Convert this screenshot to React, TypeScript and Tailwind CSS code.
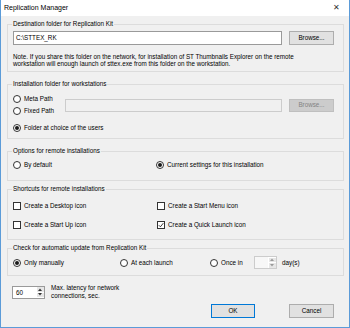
import React from "react";

function Radio({ checked, label }: { checked?: boolean; label: string }) {
  return (
    <div className="flex items-center gap-[3px]">
      <span className="flex h-[8px] w-[8px] items-center justify-center rounded-full border border-[#333] bg-white">
        {checked && <span className="h-[4px] w-[4px] rounded-full bg-[#1a1a1a]" />}
      </span>
      <span>{label}</span>
    </div>
  );
}

function Check({ checked, label }: { checked?: boolean; label: string }) {
  return (
    <div className="flex items-center gap-[3px]">
      <span className="flex h-[8px] w-[8px] items-center justify-center border border-[#333] bg-white">
        {checked && (
          <svg width="6" height="6" viewBox="0 0 6 6">
            <path d="M0.8 3.2 L2.4 4.8 L5.3 1.2" fill="none" stroke="#222" strokeWidth="0.9" />
          </svg>
        )}
      </span>
      <span>{label}</span>
    </div>
  );
}

function Group({ title, className, children }: { title: string; className: string; children: React.ReactNode }) {
  return (
    <div className={`relative border border-[#dcdcdc] ${className}`}>
      <span className="absolute left-[4px] top-[-5px] bg-[#f0f0f0] px-[1px] leading-[8px]">{title}</span>
      {children}
    </div>
  );
}

function Spin({ value, disabled, className }: { value?: string; disabled?: boolean; className: string }) {
  return (
    <div
      className={`flex items-stretch border ${
        disabled ? "border-[#cccccc] bg-[#f7f7f7]" : "border-[#9a9a9a] bg-white"
      } ${className}`}
    >
      <span className="flex-1 pl-[3px] leading-[11px]">{value}</span>
      <span className="flex w-[8px] flex-col gap-[1px] bg-white p-[0.5px]">
        <span className="flex flex-1 items-center justify-center bg-[#e6e6e6]">
          <svg width="4" height="3" viewBox="0 0 4 3">
            <path d="M0 3 L2 0.5 L4 3 Z" fill={disabled ? "#9a9a9a" : "#333"} />
          </svg>
        </span>
        <span className="flex flex-1 items-center justify-center bg-[#e6e6e6]">
          <svg width="4" height="3" viewBox="0 0 4 3">
            <path d="M0 0 L2 2.5 L4 0 Z" fill={disabled ? "#9a9a9a" : "#333"} />
          </svg>
        </span>
      </span>
    </div>
  );
}

export default function App() {
  return (
    <div className="flex h-[328px] w-[350px] flex-col border-x border-b border-[#5b9bd8] bg-[#f0f0f0] font-['Liberation_Sans',Arial,sans-serif] text-[6.3px] leading-[8px] text-black">
      {/* title bar */}
      <div className="flex h-[16px] items-center justify-between bg-white pl-[3px] pr-[9px]">
        <span className="text-[7px]">Replication Manager</span>
        <span className="text-[8px] text-[#333]">✕</span>
      </div>

      <div className="flex flex-col pl-[6px] pr-[5px] pt-[8px]">
        <Group title="Destination folder for Replication Kit" className="h-[48px] pl-[5px] pr-[9px] pt-[6px]">
          <div className="flex items-center gap-[7px]">
            <div className="flex h-[14px] flex-1 items-center border border-[#9a9a9a] bg-white pl-[2px]">C:\STTEX_RK</div>
            <div className="flex h-[14px] w-[45px] items-center justify-center border border-[#adadad] bg-[#e1e1e1]">
              Browse...
            </div>
          </div>
          <p className="mt-[8px] leading-[7px]">
            Note. If you share this folder on the network, for installation of ST Thumbnails Explorer on the remote
            <br />
            workstation will enough launch of sttex.exe from this folder on the workstation.
          </p>
        </Group>

        <Group title="Installation folder for workstations" className="mt-[12px] h-[55px] pl-[5px] pr-[9px] pt-[8px]">
          <div className="flex items-center">
            <div className="flex w-[52px] flex-col">
              <div className="flex h-[12px] items-center">
                <Radio label="Meta Path" />
              </div>
              <div className="flex h-[12px] items-center">
                <Radio label="Fixed Path" />
              </div>
            </div>
            <div className="h-[13px] flex-1 border border-[#cccccc] bg-[#f0f0f0]" />
            <div className="ml-[7px] flex h-[13px] w-[45px] items-center justify-center border border-[#bfbfbf] bg-[#cccccc] text-[#838383]">
              Browse...
            </div>
          </div>
          <div className="mt-[5px] flex h-[12px] items-center">
            <Radio checked label="Folder at choice of the users" />
          </div>
        </Group>

        <Group title="Options for remote installations" className="mt-[12px] h-[30px] pl-[5px] pt-[7px]">
          <div className="flex h-[12px] items-center">
            <div className="w-[143px]">
              <Radio label="By default" />
            </div>
            <Radio checked label="Current settings for this installation" />
          </div>
        </Group>

        <Group title="Shortcuts for remote installations" className="mt-[8px] h-[51px] pl-[5px] pt-[10px]">
          <div className="flex h-[12px] items-center">
            <div className="w-[144px]">
              <Check label="Create a Desktop icon" />
            </div>
            <Check label="Create a Start Menu icon" />
          </div>
          <div className="mt-[7px] flex h-[12px] items-center">
            <div className="w-[144px]">
              <Check label="Create a Start Up icon" />
            </div>
            <Check checked label="Create a Quick Launch icon" />
          </div>
        </Group>

        <Group title="Check for automatic update from Replication Kit" className="mt-[8px] h-[28px] pl-[5px] pt-[7px]">
          <div className="flex h-[13px] items-center">
            <div className="w-[107px]">
              <Radio checked label="Only manually" />
            </div>
            <div className="w-[90px]">
              <Radio label="At each launch" />
            </div>
            <div className="w-[44px]">
              <Radio label="Once in" />
            </div>
            <Spin disabled className="h-[13px] w-[23px]" />
            <span className="ml-[5px]">day(s)</span>
          </div>
        </Group>

        <div className="mt-[8px] flex items-center pl-[5px]">
          <Spin value="60" className="h-[13px] w-[33px]" />
          <div className="ml-[6px] leading-[8px]">
            Max. latency for network
            <br />
            connections, sec.
          </div>
        </div>

        <div className="mr-[10px] mt-[4px] flex justify-end gap-[34px]">
          <div className="flex h-[14px] w-[44px] items-center justify-center border border-[#0078d7] bg-[#e1e1e1]">OK</div>
          <div className="flex h-[14px] w-[45px] items-center justify-center border border-[#adadad] bg-[#e1e1e1]">Cancel</div>
        </div>
      </div>
    </div>
  );
}
